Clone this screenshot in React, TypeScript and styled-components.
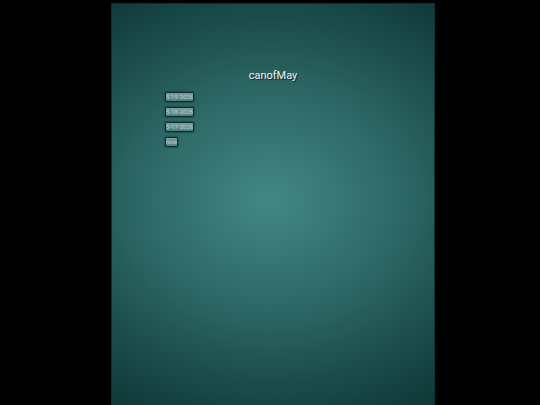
import React from "react";
import styled, { createGlobalStyle } from "styled-components";

const GlobalStyle = createGlobalStyle`
  * { box-sizing: border-box; }
  html, body { margin: 0; background: #000; }
`;

const Page = styled.div`
  display: flex;
  justify-content: center;
  min-height: 100vh;
  padding: 3px 0 0 6px;
  overflow: hidden;
`;

const Panel = styled.main`
  width: 60vw;
  padding: 64px 53px 0;
  border: 1px solid #0c3434;
  border-bottom: 0;
  background: radial-gradient(ellipse 90% 60% at 49% 49%, #438886 0%, #2a6462 50%, #235856 62%, #174645 84%, #103938 100%);
  font-family: Roboto, "Open Sans", sans-serif;
`;

const Title = styled.h1`
  margin: 0 0 8px;
  font-size: 11px;
  line-height: 16px;
  font-weight: 400;
  text-align: center;
  color: #f2f7f6;
  text-shadow: 1px 1px 1px #062424;
`;

const DateList = styled.div`
  display: flex;
  flex-direction: column;
  align-items: flex-start;
  gap: 5px;
`;

const DateButton = styled.button`
  height: 10px;
  padding: 0;
  border: 1px solid #0b2c2c;
  border-radius: 1px;
  background: linear-gradient(#7d9f9d, #527e7c);
  box-shadow: 0 0 2px #062424;
  font-family: Roboto, sans-serif;
  font-size: 6px;
  line-height: 8px;
  color: #b9cfcc;
  cursor: pointer;
`;

const entries = ["5-19-2026", "5-18-2026", "5-17-2026", "now"];

export default function App() {
  return (
    <>
      <GlobalStyle />
      <Page>
        <Panel>
          <Title>canofMay</Title>
          <DateList>
            {entries.map((entry) => (
              <DateButton key={entry} type="button">{entry}</DateButton>
            ))}
          </DateList>
        </Panel>
      </Page>
    </>
  );
}
